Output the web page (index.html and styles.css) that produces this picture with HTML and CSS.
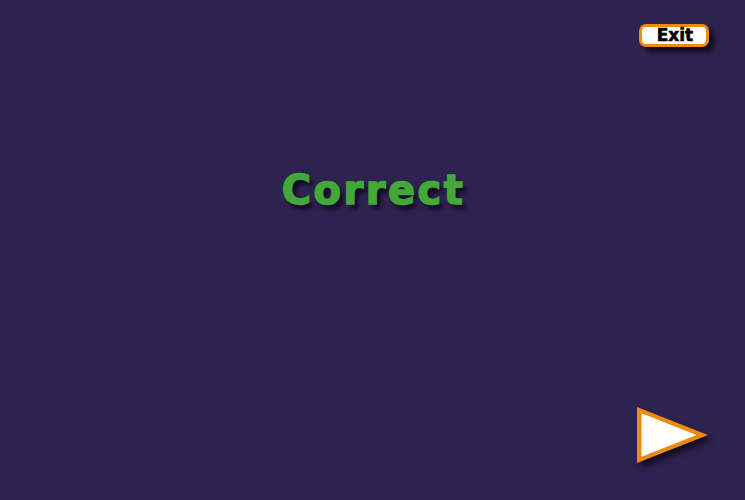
FILE: index.html
```html
<!DOCTYPE html>
<html>
<head>
<meta charset="utf-8">
<link rel="stylesheet" href="styles.css">
</head>
<body>
<div class="stage">
  <div class="top">
    <button class="exit">Exit</button>
  </div>
  <div class="middle">
    <h1 class="result">Correct</h1>
  </div>
  <div class="bottom">
    <svg class="next" width="72" height="57" viewBox="0 0 72 57">
      <polygon points="0,0 0,56 71,28" fill="#ee8a0e"/>
      <polygon points="4.5,6.3 4.5,49.7 59.5,28" fill="#ffffff"/>
    </svg>
  </div>
</div>
</body>
</html>
```

FILE: styles.css
```css
html, body {
  margin: 0;
  padding: 0;
  background: #2e2350;
}
.stage {
  width: 745px;
  height: 500px;
  display: flex;
  flex-direction: column;
  box-sizing: border-box;
  font-family: "DejaVu Sans", sans-serif;
}
.top {
  display: flex;
  justify-content: flex-end;
  padding: 24px 36px 0 0;
}
.exit {
  width: 70px;
  height: 23px;
  box-sizing: border-box;
  background: #ffffff;
  border: 3px solid #ee8a0e;
  border-radius: 7px;
  font-family: "DejaVu Sans", sans-serif;
  font-weight: bold;
  font-size: 17px;
  line-height: 15px;
  color: #000;
  -webkit-text-stroke: 0.6px #000;
  padding: 0 0 0 2px;
  margin: 0;
  box-shadow: 5px 5px 4px rgba(10, 6, 25, 0.8);
}
.middle {
  display: flex;
  justify-content: center;
  padding-top: 119px;
}
.result {
  margin: 0 0 0 2px;
  font-family: "DejaVu Sans", sans-serif;
  font-weight: bold;
  font-size: 40px;
  letter-spacing: 2.5px;
  line-height: 48px;
  color: #43a838;
  -webkit-text-stroke: 1.5px #43a838;
  text-shadow: 4px 5px 4px rgba(10, 6, 25, 0.85);
}
.bottom {
  margin-top: auto;
  display: flex;
  justify-content: flex-end;
  padding: 0 36px 36px 0;
}
.next {
  display: block;
  filter: drop-shadow(4px 5px 3px rgba(10, 6, 25, 0.8));
}
```
